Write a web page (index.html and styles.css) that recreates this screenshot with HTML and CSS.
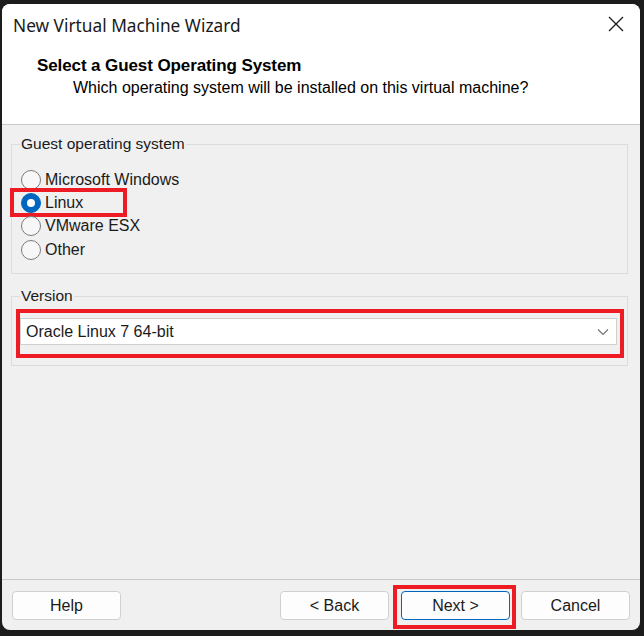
FILE: index.html
```html
<!DOCTYPE html>
<html>
<head>
<meta charset="utf-8">
<link rel="stylesheet" href="styles.css">
</head>
<body>
<div class="window">
  <div class="header">
    <div class="titlebar">
      <span class="title">New Virtual Machine Wizard</span>
      <svg class="close" width="16" height="16" viewBox="0 0 16 16"><path d="M1 1 L15 15 M15 1 L1 15" stroke="#1a1a1a" stroke-width="1.3" fill="none"/></svg>
    </div>
    <div class="heading">Select a Guest Operating System</div>
    <div class="subheading">Which operating system will be installed on this virtual machine?</div>
  </div>
  <div class="content">
    <fieldset class="group group-os">
      <legend>Guest operating system</legend>
      <div class="radio-row"><span class="radio"></span><span class="label">Microsoft Windows</span></div>
      <div class="radio-row"><span class="radio checked"></span><span class="label">Linux</span><span class="mark mark-linux"></span></div>
      <div class="radio-row"><span class="radio"></span><span class="label">VMware ESX</span></div>
      <div class="radio-row"><span class="radio"></span><span class="label">Other</span></div>
    </fieldset>
    <fieldset class="group group-version">
      <legend>Version</legend>
      <div class="select">
        <span class="select-text">Oracle Linux 7 64-bit</span>
        <svg class="chevron" width="12" height="8" viewBox="0 0 12 8"><path d="M1 1.5 L6 6.5 L11 1.5" stroke="#707070" stroke-width="1.1" fill="none"/></svg>
        <span class="mark mark-version"></span>
      </div>
    </fieldset>
  </div>
  <div class="footer">
    <button class="btn">Help</button>
    <span class="spacer"></span>
    <button class="btn">&lt; Back</button>
    <button class="btn btn-default">Next &gt;<span class="mark mark-next"></span></button>
    <button class="btn">Cancel</button>
  </div>
</div>
</body>
</html>
```
FILE: styles.css
```css
html, body {
  margin: 0;
  padding: 0;
}
body {
  background: #1c1c1c;
  width: 644px;
  height: 636px;
  padding: 4px 0 0 2px;
  box-sizing: border-box;
  font-family: "Liberation Sans", Arial, sans-serif;
  color: #000;
}
.window {
  width: 638px;
  height: 626px;
  border-radius: 8px;
  background: #f0f0f0;
  overflow: hidden;
  display: flex;
  flex-direction: column;
}
.header {
  background: #fff;
  height: 120px;
  border-bottom: 1px solid #c9c9c9;
  flex: none;
}
.titlebar {
  height: 42px;
  display: flex;
  align-items: center;
  padding-left: 11px;
}
.title {
  font-family: "Noto Sans", "Open Sans", sans-serif;
  font-size: 17.3px;
  color: #1a1a1a;
  flex: 1;
}
.close {
  margin-right: 16px;
  margin-top: -3px;
}
.heading {
  margin-top: 9px;
  padding-left: 35px;
  font-weight: bold;
  font-size: 17px;
  line-height: 22px;
  letter-spacing: -0.1px;
}
.subheading {
  padding-left: 71px;
  font-size: 16px;
  line-height: 21px;
}
.content {
  flex: 1;
  padding: 10px 12px 0 9px;
  display: flex;
  flex-direction: column;
  gap: 13px;
  font-size: 16px;
}
.group {
  margin: 0;
  border: 1px solid #dcdcdc;
  padding: 0 10px 0 8px;
  min-width: 0;
}
.group legend {
  padding: 0 1px;
  line-height: 18px;
  font-size: 15.5px;
  color: #1a1a1a;
}
.group-os {
  padding-top: 15px;
  padding-bottom: 12px;
}
.radio-row {
  position: relative;
  height: 23.3px;
  display: flex;
  align-items: center;
  gap: 4px;
  padding-left: 1px;
}
.radio {
  width: 18px;
  height: 18px;
  border-radius: 50%;
  border: 1px solid #7b7b7b;
  background: #f7f7f7;
  flex: none;
  box-sizing: content-box;
}
.radio.checked {
  background: #0067c0;
  border-color: #0067c0;
  position: relative;
}
.radio.checked::after {
  content: "";
  position: absolute;
  left: 5px;
  top: 5px;
  width: 8px;
  height: 8px;
  border-radius: 50%;
  background: #fff;
}
.label {
  color: #1a1a1a;
}
.mark {
  position: absolute;
  border: 4px solid #ed1c24;
  pointer-events: none;
}
.mark-linux {
  left: -10px;
  top: -3px;
  width: 109px;
  height: 21px;
}
.group-version {
  padding-top: 13px;
  padding-bottom: 20px;
}
.select {
  position: relative;
  height: 25px;
  background: #fff;
  border: 1px solid #cfcfcf;
  display: flex;
  align-items: center;
  padding-left: 5px;
  padding-right: 7px;
}
.select-text {
  flex: 1;
  color: #1a1a1a;
}
.mark-version {
  left: -5px;
  top: -10px;
  right: -8px;
  bottom: -14px;
}
.footer {
  flex: none;
  height: 51px;
  border-top: 1px solid #c9c9c9;
  display: flex;
  align-items: flex-start;
  padding: 11px 10px 0 10px;
  box-sizing: border-box;
  gap: 11px;
}
.spacer {
  flex: 1;
}
.btn {
  position: relative;
  width: 109px;
  height: 29px;
  background: #fdfdfd;
  border: 1px solid #d0d0d0;
  border-radius: 4px;
  font-family: "Liberation Sans", Arial, sans-serif;
  font-size: 16px;
  color: #1a1a1a;
  padding: 0;
}
.btn-default {
  border-color: #0067c0;
  margin-left: 1px;
}
.mark-next {
  left: -9px;
  top: -7px;
  right: -7px;
  bottom: -10px;
}
```
